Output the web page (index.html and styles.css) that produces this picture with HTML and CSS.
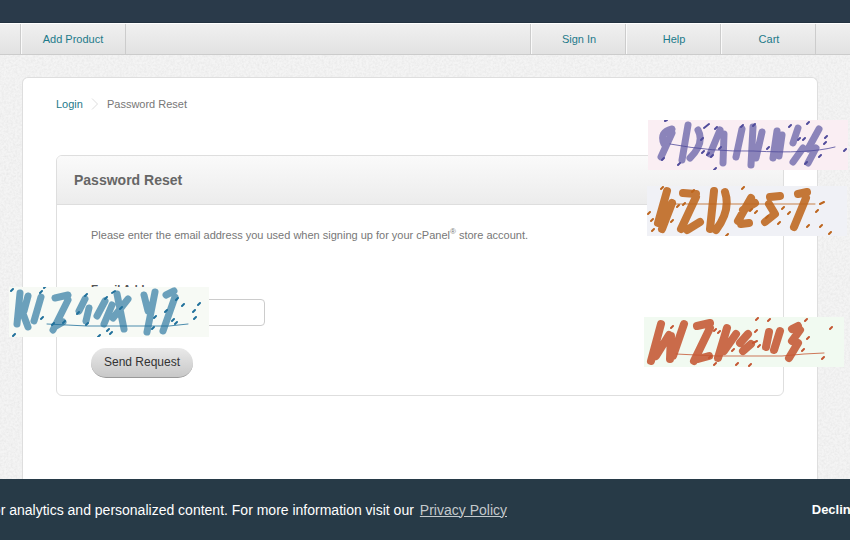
FILE: index.html
```html
<!DOCTYPE html>
<html lang="en">
<head>
<meta charset="utf-8">
<title>Password Reset</title>
<link rel="stylesheet" href="styles.css">
</head>
<body>
<svg class="texture" aria-hidden="true">
  <filter id="grain" x="0" y="0" width="100%" height="100%">
    <feTurbulence type="fractalNoise" baseFrequency="0.45" numOctaves="3" seed="4"/>
    <feColorMatrix values="0 0 0 0 0.45  0 0 0 0 0.45  0 0 0 0 0.45  0.3 0 0 0 -0.1"/>
  </filter>
  <rect width="100%" height="100%" filter="url(#grain)"/>
</svg>
<header class="topbar"></header>
<nav class="nav">
  <a class="nav-link nav-add" href="#">Add Product</a>
  <div class="nav-group">
    <a class="nav-link" href="#">Sign In</a>
    <a class="nav-link" href="#">Help</a>
    <a class="nav-link" href="#">Cart</a>
  </div>
</nav>
<main class="page">
  <div class="crumbs">
    <a href="#">Login</a>
    <svg class="chevron" width="8" height="12" viewBox="0 0 8 12" aria-hidden="true"><path d="M1 0.500L6.500 6L1 11.500"/></svg>
    <span>Password Reset</span>
  </div>
  <section class="panel">
    <h1 class="panel-title">Password Reset</h1>
    <form class="panel-body">
      <p class="intro">Please enter the email address you used when signing up for your cPanel<sup>®</sup> store account.</p>
      <label class="label" for="email">Email Address</label>
      <input class="field" id="email" type="email">
      <button class="send" type="button">Send Request</button>
    </form>
  </section>
</main>

<!-- Verification tiles: abstract brush marks, a strike line and speckles -->
<svg class="tile tile-violet" viewBox="0 0 200 50" aria-hidden="true">
  <path class="brush" d="M24 9Q11 12 16 24M24 13L13 37M40 5L34 40M50 10Q57 23 42 38M72 10L62 34M76 14L75 43M94 9L88 37M105 7L103 45M114 12L108 38M129 11L125 38M134 15L131 36M150 8L145 23M155 28L145 42M171 9L160 29M168 28L160 43"/>
  <path class="strike" d="M22 24Q65 32 105 31Q160 34 187 27"/>
  <path class="speck" d="M17 1l2-1M56 8l5-4M67 9l2-2M53 20l2-2M30 45l2-2M14 40l2-2M54 33l2-2M59 35l2-2M63 37l2-2M66 50l2-2M71 29l2-2M93 7l2-2M105 6l2-2M119 29l2-2M141 7l2-2M159 4l2-2M150 20l2-2M155 20l2-2M177 18l2-2M176 24l2-2M171 37l2-2M157 44l2-2M196 31l2-2"/>
</svg>
<svg class="tile tile-orange" viewBox="0 0 200 50" aria-hidden="true">
  <path class="brush heavy" d="M20 5L11 37M25 17L15 43M36 7L49 8M49 11L34 43M40 44L53 36M67 5L63 43M78 6Q84 24 69 44M104 12L91 35M108 17L96 24M94 38L102 37M123 11L133 10M122 18L128 28L118 36M151 8L160 6M159 12L147 41"/>
  <path class="strike" d="M28 18H168"/>
  <path class="speck" d="M14 3l2-2M1 28l2-2M4 35l2-2M5 45l2-2M24 36l2-2M30 21l2-2M36 19l2-2M45 6l2-2M79 50l2-2M95 3l2-2M103 25l2-2M108 27l2-2M119 32l2-2M131 38l2-2M135 23l2-2M141 28l2-2M160 41l2-2M169 26l2-2M173 41l2-2M173 18l4-2M182 48l2-2"/>
</svg>
<svg class="tile tile-blue" viewBox="0 0 200 50" aria-hidden="true">
  <path class="brush" d="M11 6L8 37M19 9L15 24M13 24L19 40M32 10L25 34M46 11L59 8M59 13L44 43M47 39L54 35M76 12L70 24M80 21L77 34M96 14L88 29M103 18L95 37M108 7L115 42M119 12L104 31M135 8L139 24M146 5L138 45M157 8L165 4M166 10L154 44"/>
  <path class="strike" d="M38 37L78 39H160L179 37"/>
  <path class="speck" d="M2 4l2-2M31 6l2-2M35 1l2-2M4 49l2-2M32 32l2-2M43 38l2-2M54 36l2-2M68 27l2-2M76 9l2-2M77 38l2-2M96 12l2-2M103 6l3-2M111 22l2-2M98 44l2-2M101 47l2-2M89 50l2-2M145 31l2-2M143 42l2-2M156 25l2-2M163 34l2-2M166 37l2-2M167 13l2-2M173 19l2-2M189 18l2-2M184 25l2-2M185 32l2-2"/>
</svg>
<svg class="tile tile-red" viewBox="0 0 200 50" aria-hidden="true">
  <path class="brush heavy" d="M17 7L7 44M12 39L25 18M27 19L26 42M40 7L29 39M53 9L66 6M66 11L50 44M54 42L65 39M83 11L74 41M92 17L80 34M104 17L96 26M107 27L99 34M125 15L122 30M136 14L130 33M148 12L154 9M156 13L148 24M154 26L145 41"/>
  <path class="strike" d="M32 37L72 39H138L160 37L180 36"/>
  <path class="speck" d="M27 11l2-2M112 3l2-2M124 4l2-2M161 4l2-2M186 12l2-2M163 22l2-2M70 14l2-2M74 16l2-2M111 15l2-2M109 26l4-2M114 30l2-2M65 41l2-2M70 48l2-2M88 34l2-2M92 48l2-2M105 49l2-2M158 34l2-2M178 42l2-2"/>
</svg>

<footer class="cookie">
  <p class="cookie-text">s for analytics and personalized content. For more information visit our <a href="#">Privacy Policy</a></p>
  <button class="decline" type="button">Decline</button>
</footer>
</body>
</html>
```
FILE: styles.css
```css
* { box-sizing: border-box; }
body {
  margin: 0;
  min-height: 100vh;
  display: flex;
  flex-direction: column;
  position: relative;
  overflow: hidden;
  background: #f4f4f4;
  color: #777;
  font: 11px/20px "Liberation Sans", Arial, sans-serif;
}
a { color: #1d7a8a; text-decoration: none; }
.texture { position: absolute; inset: 0; width: 100%; height: 100%; z-index: -1; }
.topbar { height: 23px; background: #2a3a4a; border-bottom: 1px solid #223240; }
.nav {
  display: flex;
  justify-content: space-between;
  height: 32px;
  padding: 0 34px 0 20px;
  background: linear-gradient(#f0f0f0, #e2e2e2);
  border-top: 1px solid #fff;
  border-bottom: 1px solid #ccc;
}
.nav-group { display: flex; border-right: 1px solid #ccc; }
.nav-link {
  width: 95px;
  padding-left: 2px;
  line-height: 30px;
  text-align: center;
  border-left: 1px solid #ccc;
  box-shadow: inset 1px 0 #fafafa;
}
.nav-add { width: 106px; padding-left: 0; border-right: 1px solid #ccc; }
.page {
  flex: 1;
  margin: 22px 32px 0 22px;
  padding: 16px 33px 0;
  background: #fff;
  border: 1px solid #dedede;
  border-bottom: 0;
  border-radius: 6px 6px 0 0;
}
.crumbs { display: flex; align-items: center; gap: 8px; height: 20px; }
.chevron { fill: none; stroke: #ddd; }
.panel { margin-top: 41px; border: 1px solid #dedede; border-radius: 6px; }
.panel-title {
  margin: 0;
  padding: 0 17px;
  font-size: 14px;
  line-height: 48px;
  color: #666;
  background: linear-gradient(#fafafa, #ececec);
  border-bottom: 1px solid #dedede;
  border-radius: 5px 5px 0 0;
}
.panel-body { display: flex; flex-direction: column; align-items: flex-start; padding: 20px 34px 17px; }
.intro { margin: 0 0 34px; }
.intro sup { font-size: 8px; line-height: 0; }
.label { font-weight: bold; color: #555; }
.field { width: 174px; height: 27px; border: 1px solid #ccc; border-radius: 4px; background: #fff; }
.send {
  height: 30px;
  margin-top: 22px;
  padding: 0 13px 2px;
  border: 0;
  border-bottom: 1px solid #999;
  border-radius: 15px;
  background: linear-gradient(#e9e9e9, #c8c8c8);
  color: #333;
  font: 12px "Liberation Sans", Arial, sans-serif;
}
.tile { position: absolute; width: 200px; height: 50px; fill: none; stroke-linecap: round; stroke-linejoin: round; }
.tile-violet { left: 648px; top: 120px; background: #faeef3; stroke: #504b9b; }
.tile-orange { left: 647px; top: 186px; background: #f0f1f6; stroke: #bd651d; }
.tile-blue { left: 9px; top: 287px; background: #f7faf5; stroke: #20709b; }
.tile-red { left: 644px; top: 317px; background: #f1faf1; stroke: #c45632; }
.brush { stroke-width: 7px; opacity: 0.65; }
.heavy { stroke-width: 8px; opacity: 0.88; }
.strike { stroke-width: 1px; opacity: 0.8; }
.speck { stroke-width: 2px; }
.cookie {
  position: fixed;
  left: 0;
  right: 0;
  bottom: 0;
  height: 61px;
  display: flex;
  align-items: center;
  justify-content: space-between;
  overflow: hidden;
  background: #273a47;
  color: #fff;
}
.cookie-text {
  display: flex;
  justify-content: flex-end;
  width: 507px;
  margin: 0;
  gap: 6px;
  font-size: 14px;
  white-space: nowrap;
}
.cookie-text a { color: #c4c9cc; text-decoration: underline; }
.decline {
  flex: none;
  margin-right: -8px;
  padding: 0;
  border: 0;
  background: none;
  color: #fff;
  font: bold 13px "Liberation Sans", Arial, sans-serif;
}
```
